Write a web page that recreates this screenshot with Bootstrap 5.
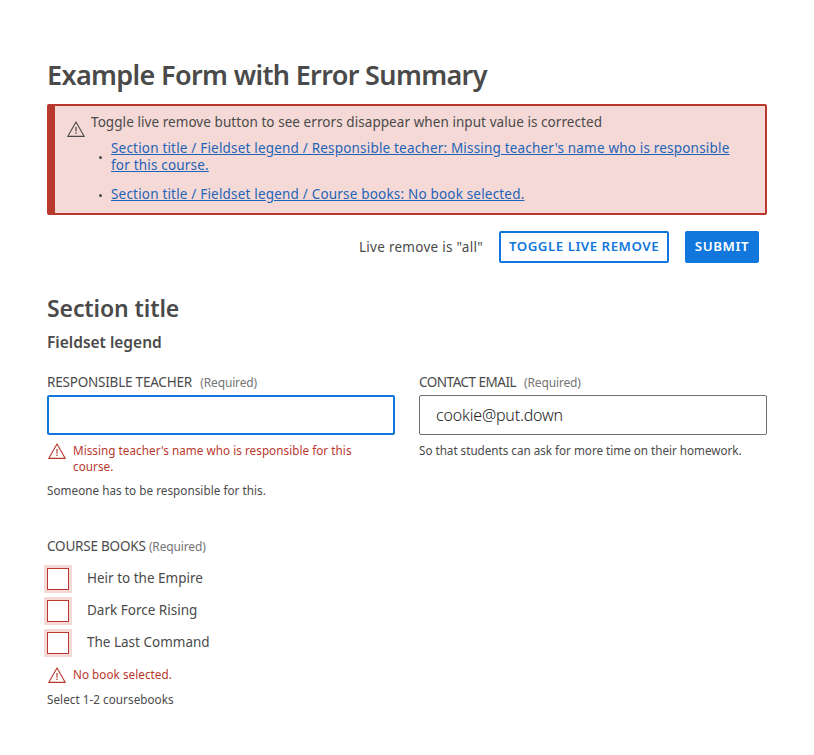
<!DOCTYPE html>
<html lang="en">
<head>
<meta charset="utf-8">
<meta name="viewport" content="width=device-width, initial-scale=1">
<title>Example Form with Error Summary</title>
<link href="https://cdn.jsdelivr.net/npm/bootstrap@5.3.0/dist/css/bootstrap.min.css" rel="stylesheet">
<style>
body{font-family:"Noto Sans","Open Sans",sans-serif;font-size:14px;line-height:20px;color:#4a4a4a;background:#fff}
.page{width:814px;padding:57px 47px 0}
.page-title{font-size:27px;line-height:36px;font-weight:600;margin:0 0 11px;letter-spacing:-.65px;white-space:nowrap}
.summary{height:111px;border:2px solid #b8382d;border-left-width:8px;border-radius:2px;background:#f5d9d6;padding:6px 20px 0 12px;font-size:13.5px}
.summary-icon{margin-top:9px;margin-right:6px}
.summary-lead{letter-spacing:.065px}
.summary li{line-height:17px;margin-bottom:12px}
.summary a{color:#1e64b8;text-underline-offset:1px;letter-spacing:.187px;white-space:nowrap}
.dot{width:3px;height:3px;border-radius:50%;background:#4a4a4a;margin:1px 9px 0 8px}
.actions{margin-top:16px;gap:16px;padding-right:8px;font-size:13.5px}
.live-state{letter-spacing:.28px}
.act{height:32px;border:2px solid #1177dd;border-radius:2px;padding:0 0 2px;font-size:13.3px;line-height:26px;font-weight:600;color:#1177dd;background:#fff;white-space:nowrap}
.act-toggle{width:170px;letter-spacing:.5px}
.act-submit{width:74px;background:#1177dd;color:#fff;letter-spacing:.6px}
.section-title{font-size:23px;line-height:32px;font-weight:600;margin:29px 0 6px;letter-spacing:-.1px}
.legend-text{font-size:15.5px;line-height:24px;font-weight:600;margin:0 0 18px}
.fields{gap:24px}
.field{width:348px}
.field-label{font-size:13.5px;line-height:20px;margin:0 0 2px;display:block;letter-spacing:-.21px}
.label-tight{letter-spacing:-.5px}
.req{font-size:12px;color:#757575;letter-spacing:-.15px}
.field .req{margin-left:5px}
.text-input{height:40px;border:1px solid #6f6f6f;border-radius:2px;padding:0 16px;font-size:16px;color:#222;font-weight:300;letter-spacing:-.18px}
.text-input.active-input{border:2px solid #1177dd;outline:0}
.note{font-size:11.7px;line-height:16px;margin:8px 0 0;letter-spacing:.04px}
.note-first{margin-top:7px}
.note-tight{letter-spacing:-.02px}
.err{color:#b8382d}
.err svg{margin:1px 7px 0 1px}
.books{margin-top:38px}
.book-list{padding-top:6px}
.book{height:32px;font-size:13.5px;gap:18px}
.book span{padding-bottom:2px}
.form-check-input[type=checkbox].box{width:22px;height:22px;margin:0;border:1px solid #b8382d;border-radius:0;box-shadow:0 0 0 3px #f5d9d6}
</style>
<script src="https://cdn.jsdelivr.net/npm/bootstrap@5.3.0/dist/js/bootstrap.bundle.min.js"></script>
</head>
<body>
<svg class="d-none" aria-hidden="true">
  <symbol id="warning" viewBox="0 0 18 16"><path d="M9 .9 17.3 15.4H.7Z" fill="none" stroke="currentColor" stroke-width="1.1" stroke-linejoin="round"/><path d="M9 6v4.6M9 11.6V13.1" stroke="currentColor" stroke-width="1.2" fill="none"/></symbol>
</svg>
<main class="page">
  <h1 class="page-title">Example Form with Error Summary</h1>
  <section class="summary d-flex align-items-start" role="alert">
    <svg class="summary-icon flex-shrink-0" width="18" height="16"><use href="#warning"/></svg>
    <div class="flex-grow-1">
      <div class="summary-lead mb-2">Toggle live remove button to see errors disappear when input value is corrected</div>
      <ul class="list-unstyled mb-0">
        <li class="d-flex align-items-center"><span class="dot flex-shrink-0"></span><a href="#teacher">Section title / Fieldset legend / Responsible teacher: Missing teacher's name who is responsible<br>for this course.</a></li>
        <li class="d-flex align-items-center"><span class="dot flex-shrink-0"></span><a href="#books">Section title / Fieldset legend / Course books: No book selected.</a></li>
      </ul>
    </div>
  </section>
  <div class="actions d-flex align-items-center justify-content-end">
    <span class="live-state">Live remove is "all"</span>
    <button type="button" class="btn act act-toggle">TOGGLE LIVE REMOVE</button>
    <button type="button" class="btn act act-submit">SUBMIT</button>
  </div>
  <h2 class="section-title">Section title</h2>
  <h3 class="legend-text">Fieldset legend</h3>
  <div class="fields d-flex">
    <div class="field">
      <label class="field-label" for="teacher">RESPONSIBLE TEACHER <span class="req">(Required)</span></label>
      <input id="teacher" class="text-input active-input d-block w-100" type="text">
      <div class="note note-first err d-flex"><svg class="flex-shrink-0" width="18" height="16"><use href="#warning"/></svg><span>Missing teacher's name who is responsible for this<br>course.</span></div>
      <p class="note">Someone has to be responsible for this.</p>
    </div>
    <div class="field">
      <label class="field-label label-tight" for="email">CONTACT EMAIL <span class="req">(Required)</span></label>
      <input id="email" class="text-input d-block w-100" type="text" value="cookie@put.down">
      <p class="note note-first note-tight">So that students can ask for more time on their homework.</p>
    </div>
  </div>
  <section class="books" id="books">
    <div class="field-label mb-0">COURSE BOOKS <span class="req">(Required)</span></div>
    <div class="book-list">
      <label class="book d-flex align-items-center"><input type="checkbox" class="form-check-input box"><span>Heir to the Empire</span></label>
      <label class="book d-flex align-items-center"><input type="checkbox" class="form-check-input box"><span>Dark Force Rising</span></label>
      <label class="book d-flex align-items-center"><input type="checkbox" class="form-check-input box"><span>The Last Command</span></label>
    </div>
    <div class="note note-first err d-flex"><svg class="flex-shrink-0" width="18" height="16"><use href="#warning"/></svg><span>No book selected.</span></div>
    <p class="note">Select 1-2 coursebooks</p>
  </section>
</main>
</body>
</html>
